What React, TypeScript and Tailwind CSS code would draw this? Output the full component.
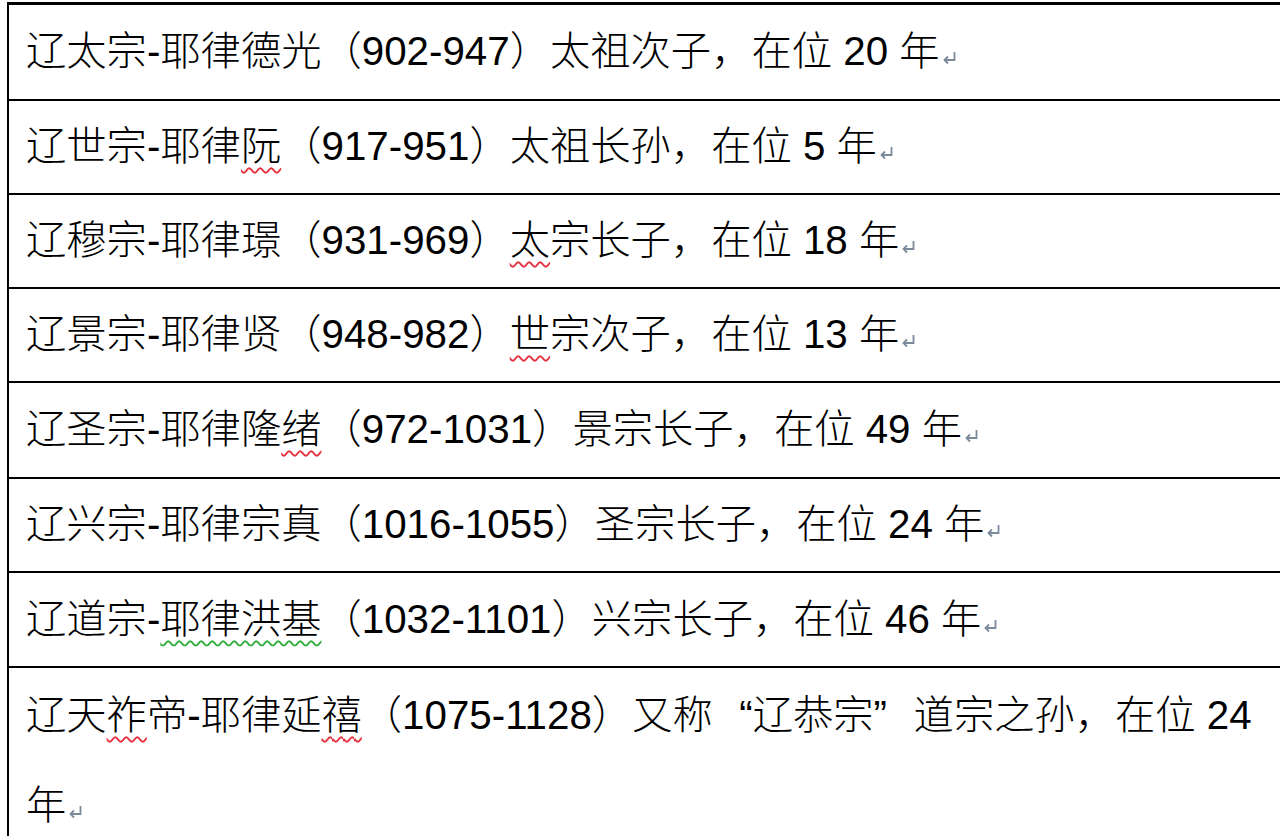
import type { ReactNode } from "react";

// Word 段落标记 ↵
function ReturnMark() {
  return (
    <svg
      width="16"
      height="16"
      viewBox="0 0 16 16"
      className="inline-block align-[-1px] ml-[1px]"
      fill="none"
      stroke="#7b8a9b"
      strokeWidth="1.8"
    >
      <path d="M13.5 2 V10 H3.5" />
      <path d="M7 6.5 L3.5 10 L7 13.5" />
    </svg>
  );
}

function Red({ children }: { children: ReactNode }) {
  return (
    <span className="underline decoration-wavy decoration-[#e5323e] decoration-[1.5px] underline-offset-[7px] [text-decoration-skip-ink:none]">
      {children}
    </span>
  );
}

function Green({ children }: { children: ReactNode }) {
  return (
    <span className="underline decoration-wavy decoration-[#2fae3c] decoration-[1.5px] underline-offset-[7px] [text-decoration-skip-ink:none]">
      {children}
    </span>
  );
}

function Row({ h, children }: { h: string; children: ReactNode }) {
  return (
    <div className={`flex items-center border-b-2 border-black pl-[17px] ${h}`}>
      <p className="whitespace-nowrap leading-[90px]">
        {children}
        <ReturnMark />
      </p>
    </div>
  );
}

export default function App() {
  return (
    <div className="h-[836px] w-[1280px] overflow-hidden bg-white">
      <div
        className="ml-[7px] mt-[2px] w-[1320px] border-l-2 border-t-[3px] border-black text-[40.3px] font-light text-black"
        style={{ fontFamily: '"Liberation Sans", "Noto Sans CJK SC", sans-serif' }}
      >
        <Row h="h-[96px]">辽太宗-耶律德光（902-947）太祖次子，在位 20 年</Row>
        <Row h="h-[94px]">
          辽世宗-耶律<Red>阮</Red>（917-951）太祖长孙，在位 5 年
        </Row>
        <Row h="h-[94px]">
          辽穆宗-耶律璟（931-969）<Red>太</Red>宗长子，在位 18 年
        </Row>
        <Row h="h-[94px]">
          辽景宗-耶律贤（948-982）<Red>世</Red>宗次子，在位 13 年
        </Row>
        <Row h="h-[96px]">
          辽圣宗-耶律隆<Red>绪</Red>（972-1031）景宗长子，在位 49 年
        </Row>
        <Row h="h-[94px]">辽兴宗-耶律宗真（1016-1055）圣宗长子，在位 24 年</Row>
        <Row h="h-[95px]">
          辽道宗-<Green>耶律洪基</Green>（1032-1101）兴宗长子，在位 46 年
        </Row>
        <div className="pl-[17px] pt-[3px] leading-[90px]">
          <p className="whitespace-nowrap">
            辽天<Red>祚</Red>帝-耶律延<Red>禧</Red>（1075-1128）又称
            <span className="inline-block w-[40px] text-right">“</span>辽恭宗
            <span className="inline-block w-[40px] text-left">”</span>道宗之孙，在位 24
          </p>
          <p>
            年
            <ReturnMark />
          </p>
        </div>
      </div>
    </div>
  );
}
